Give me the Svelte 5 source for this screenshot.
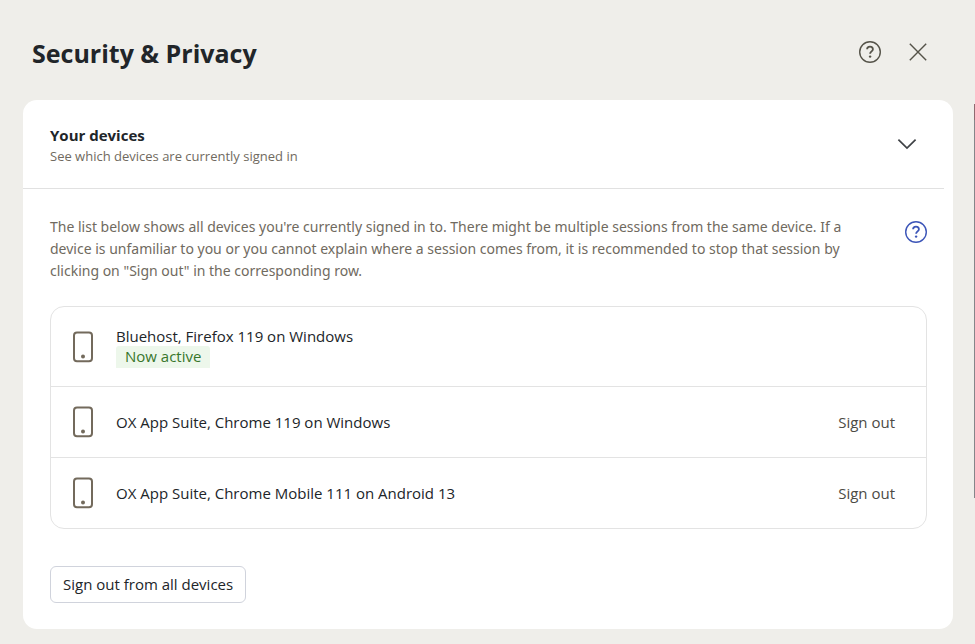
<script lang="ts">
  interface Device {
    id: number;
    name: string;
    current: boolean;
  }

  let devices: Device[] = $state([
    { id: 1, name: "Bluehost, Firefox 119 on Windows", current: true },
    { id: 2, name: "OX App Suite, Chrome 119 on Windows", current: false },
    { id: 3, name: "OX App Suite, Chrome Mobile 111 on Android 13", current: false },
  ]);
  let expanded = $state(true);

  function signOut(id: number) {
    devices = devices.filter((device) => device.id !== id);
  }

  function signOutAll() {
    devices = devices.filter((device) => device.current);
  }
</script>

{#snippet helpIcon()}
  <svg width="24" height="24" viewBox="0 0 24 24" fill="none" stroke="currentColor" stroke-width="1.4" aria-hidden="true">
    <circle cx="12" cy="12" r="10.3"></circle>
    <path d="M9.1 9.3C9.1 7.6 10.3 6.6 12 6.6s2.9 1 2.9 2.6c0 2.2-2.8 2.2-2.8 4.6" stroke-width="1.8"></path>
    <circle cx="12.1" cy="16.6" r="1.2" fill="currentColor" stroke="none"></circle>
  </svg>
{/snippet}

<div class="settings">
  <header>
    <h1>Security &amp; Privacy</h1>
    <div class="actions">
      <button class="icon-btn" aria-label="Help">{@render helpIcon()}</button>
      <button class="icon-btn" aria-label="Close">
        <svg width="24" height="24" viewBox="0 0 24 24" fill="none" stroke="currentColor" stroke-width="1.4" aria-hidden="true">
          <path d="M3.8 3.8l16.4 16.4M20.2 3.8L3.8 20.2"></path>
        </svg>
      </button>
    </div>
  </header>

  <section class="panel">
    <div class="panel-header">
      <div>
        <h2>Your devices</h2>
        <p>See which devices are currently signed in</p>
      </div>
      <button class="icon-btn toggle" aria-label="Your devices" aria-expanded={expanded} onclick={() => (expanded = !expanded)}>
        <svg width="24" height="24" viewBox="0 0 24 24" fill="none" stroke="currentColor" stroke-width="1.7" aria-hidden="true">
          <path d="M3.4 7.6l8.6 8.5 8.6-8.5"></path>
        </svg>
      </button>
    </div>

    {#if expanded}
      <div class="panel-body">
        <div class="intro">
          <p>
            The list below shows all devices you're currently signed in to. There might be multiple sessions from
            the same device. If a device is unfamiliar to you or you cannot explain where a session comes from, it is
            recommended to stop that session by clicking on "Sign out" in the corresponding row.
          </p>
          <button class="icon-btn help" aria-label="Help about your devices">{@render helpIcon()}</button>
        </div>

        <ul>
          {#each devices as device (device.id)}
            <li class:current={device.current}>
              <svg class="phone" width="32" height="32" viewBox="0 0 32 32" fill="none" stroke="currentColor" stroke-width="2" aria-hidden="true">
                <rect x="7" y="1.4" width="18" height="28.8" rx="3"></rect>
                <circle cx="16" cy="25.6" r="2" fill="currentColor" stroke="none"></circle>
              </svg>
              <div class="name">
                {device.name}
                {#if device.current}
                  <span class="badge">Now active</span>
                {/if}
              </div>
              {#if !device.current}
                <button class="sign-out" onclick={() => signOut(device.id)}>Sign out</button>
              {/if}
            </li>
          {/each}
        </ul>

        <button class="sign-out-all" onclick={signOutAll}>Sign out from all devices</button>
      </div>
    {/if}
  </section>

  <div class="page-edge"></div>
</div>

<style>
  :global(body) {
    background-color: #efeeea;
    margin: 0;
  }

  .settings {
    position: relative;
    min-height: 100vh;
    box-sizing: border-box;
    padding: 0 22px 15px 23px;
    background-color: #efeeea;
    color: #212529;
    font-family: "Segoe UI", "Open Sans", "Noto Sans", sans-serif;
    font-size: 15px;
    line-height: 20px;
  }

  h1,
  h2,
  p,
  ul {
    margin: 0;
    padding: 0;
  }

  button {
    font-family: inherit;
    font-size: inherit;
    line-height: inherit;
    color: inherit;
    background: none;
    border: none;
    padding: 0;
    cursor: pointer;
  }

  header {
    display: flex;
    align-items: center;
    justify-content: space-between;
    height: 100px;
    box-sizing: border-box;
    padding: 4px 23px 0 9px;
  }

  h1 {
    padding-top: 2px;
    font-size: 25px;
    line-height: 32px;
    font-weight: 700;
  }

  .actions {
    display: flex;
    gap: 24px;
    color: #555349;
  }

  .icon-btn {
    display: flex;
    flex-shrink: 0;
  }

  .panel {
    background-color: #fff;
    border-radius: 14px;
  }

  .panel-header {
    display: flex;
    align-items: center;
    justify-content: space-between;
    height: 89px;
    box-sizing: border-box;
    margin-right: 9px;
    padding: 0 25px 0 27px;
    border-bottom: 1px solid #e1e1e1;
  }

  h2 {
    padding-top: 4px;
    font-size: 15px;
    line-height: 20px;
    font-weight: 700;
  }

  .panel-header p {
    font-size: 13px;
    line-height: 22px;
    color: #706a60;
  }

  .toggle {
    color: #3f4246;
  }

  .panel-body {
    padding: 27px 26px 26px 27px;
  }

  .intro {
    display: flex;
    align-items: flex-start;
    justify-content: space-between;
    gap: 32px;
    color: #706a60;
    font-family: "Segoe UI", "Noto Sans", sans-serif;
    font-size: 14px;
    line-height: 22px;
  }

  .help {
    padding-top: 4px;
    margin-right: -1px;
    color: #3c55b8;
  }

  ul {
    margin: 24px 0 37px;
    border: 1px solid #e3e3e3;
    border-radius: 14px;
    list-style: none;
  }

  li {
    display: flex;
    align-items: center;
    min-height: 70px;
    padding: 0 31px 0 16px;
  }

  li.current {
    min-height: 79px;
  }

  li + li {
    border-top: 1px solid #e3e3e3;
  }

  .phone {
    flex-shrink: 0;
    color: #736a5c;
  }

  .name {
    flex: 1;
    padding-left: 17px;
  }

  .badge {
    display: block;
    width: fit-content;
    padding: 0 9px 2px;
    border-radius: 3px 3px 0 0;
    background-color: #edf7eb;
    color: #38762b;
  }

  .sign-out {
    color: #4c4a44;
  }

  .sign-out-all {
    display: block;
    padding: 7px 12px 8px;
    border: 1px solid #d0d3dc;
    border-radius: 6px;
    background-color: #fff;
  }

  /* sliver of the window behind the dialog */
  .page-edge {
    position: absolute;
    top: 104px;
    right: 0;
    width: 1px;
    height: 394px;
    background: linear-gradient(#8f6a70 16px, #85868a 16px);
  }
</style>
